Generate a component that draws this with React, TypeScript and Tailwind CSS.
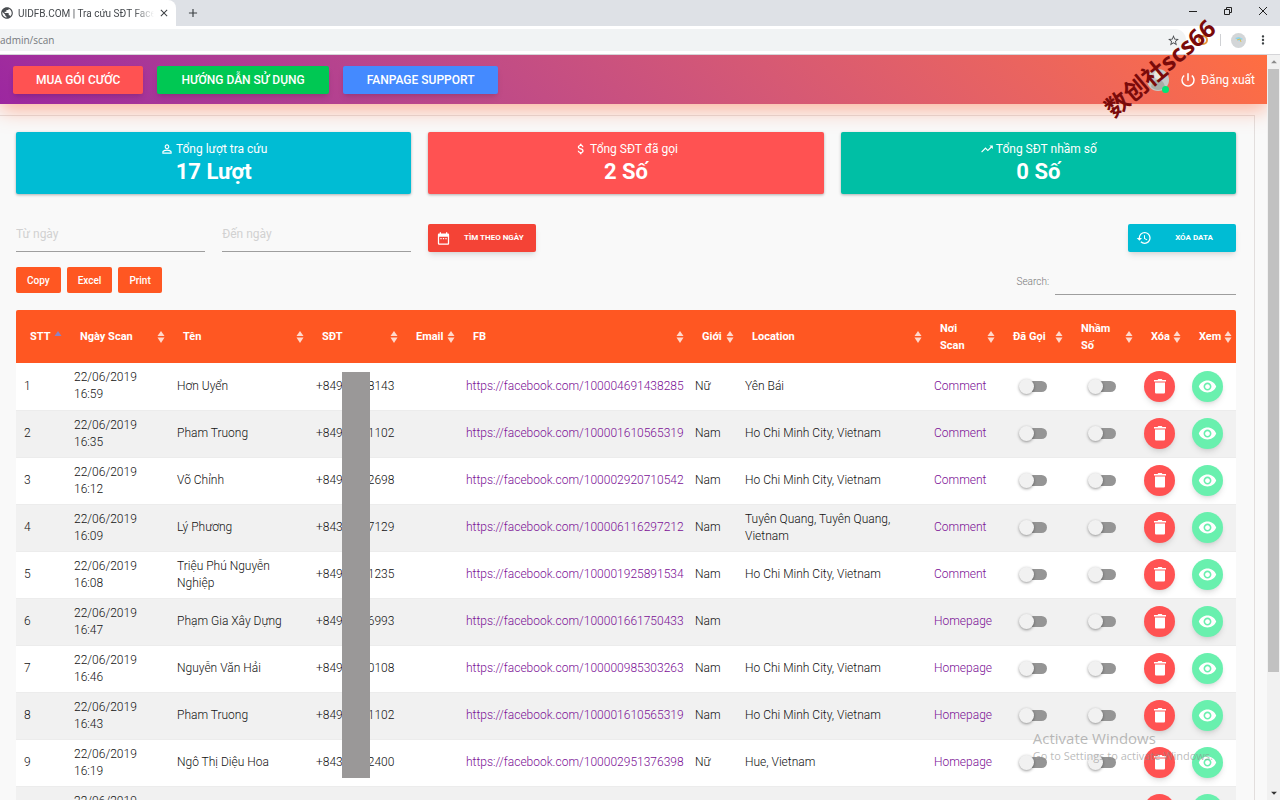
import { ReactNode, useState } from "react";
import {
  MdClose,
  MdAdd,
  MdPublic,
  MdStarBorder,
  MdMoreVert,
  MdPowerSettingsNew,
  MdPersonOutline,
  MdAttachMoney,
  MdTrendingUp,
  MdDateRange,
  MdHistory,
  MdRemoveRedEye,
  MdArrowDropUp,
  MdArrowDropDown,
} from "react-icons/md";

interface Scan {
  id: number;
  time: string;
  name: string;
  phone: [string, string];
  fb: string;
  gender: string;
  location: string;
  source: string;
}

const scans: Scan[] = [
  { id: 1, time: "16:59", name: "Hơn Uyển", phone: ["+849", "8143"], fb: "100004691438285", gender: "Nữ", location: "Yên Bái", source: "Comment" },
  { id: 2, time: "16:35", name: "Pham Truong", phone: ["+849", "1102"], fb: "100001610565319", gender: "Nam", location: "Ho Chi Minh City, Vietnam", source: "Comment" },
  { id: 3, time: "16:12", name: "Võ Chỉnh", phone: ["+849", "2698"], fb: "100002920710542", gender: "Nam", location: "Ho Chi Minh City, Vietnam", source: "Comment" },
  { id: 4, time: "16:09", name: "Lý Phương", phone: ["+843", "7129"], fb: "100006116297212", gender: "Nam", location: "Tuyên Quang, Tuyên Quang, Vietnam", source: "Comment" },
  { id: 5, time: "16:08", name: "Triệu Phú Nguyễn Nghiệp", phone: ["+849", "1235"], fb: "100001925891534", gender: "Nam", location: "Ho Chi Minh City, Vietnam", source: "Comment" },
  { id: 6, time: "16:47", name: "Phạm Gia Xây Dựng", phone: ["+849", "6993"], fb: "100001661750433", gender: "Nam", location: "", source: "Homepage" },
  { id: 7, time: "16:46", name: "Nguyễn Văn Hải", phone: ["+849", "0108"], fb: "100000985303263", gender: "Nam", location: "Ho Chi Minh City, Vietnam", source: "Homepage" },
  { id: 8, time: "16:43", name: "Pham Truong", phone: ["+849", "1102"], fb: "100001610565319", gender: "Nam", location: "Ho Chi Minh City, Vietnam", source: "Homepage" },
  { id: 9, time: "16:19", name: "Ngô Thị Diệu Hoa", phone: ["+843", "2400"], fb: "100002951376398", gender: "Nữ", location: "Hue, Vietnam", source: "Homepage" },
  { id: 10, time: "16:12", name: "", phone: ["", ""], fb: "", gender: "", location: "", source: "" },
];

const columns = [
  { title: "STT", width: "w-[50px]" },
  { title: "Ngày Scan", width: "w-[103px]" },
  { title: "Tên", width: "w-[139px]" },
  { title: "SĐT", width: "w-[94px]" },
  { title: "Email", width: "w-[57px]" },
  { title: "FB", width: "w-[229px]" },
  { title: "Giới", width: "w-[50px]" },
  { title: "Location", width: "" },
  { title: "Nơi Scan", width: "w-[73px]" },
  { title: "Đã Gọi", width: "w-[68px]" },
  { title: "Nhầm Số", width: "w-[70px]" },
  { title: "Xóa", width: "w-[48px]" },
  { title: "Xem", width: "w-[51px]" },
];

function BrowserBar() {
  return (
    <div className="shrink-0 bg-white">
      <div className="flex h-[26px] bg-[#dee1e6]">
        <div className="flex w-44 items-center rounded-tr-lg bg-white">
          <MdPublic className="size-3.5 shrink-0 text-[#4a4d51]" />
          <span className="ml-1 w-[136px] overflow-hidden whitespace-nowrap text-[10px] text-[#45494d] [mask-image:linear-gradient(to_right,black_85%,transparent)]">
            UIDFB.COM | Tra cứu SĐT Facebook
          </span>
          <button aria-label="Close tab" className="ml-1 text-[#3c4043]">
            <MdClose className="size-3" />
          </button>
        </div>
        <button aria-label="New tab" className="ml-2.5 text-[#3c4043]">
          <MdAdd className="size-3.5" />
        </button>
        <div className="ml-auto flex items-center gap-[25px] pr-3 pb-1 text-[#222]">
          <button aria-label="Minimize">
            <svg width="10" height="10" viewBox="0 0 10 10" stroke="currentColor">
              <path d="M1 5.5h8" />
            </svg>
          </button>
          <button aria-label="Restore">
            <svg width="10" height="10" viewBox="0 0 10 10" fill="none" stroke="currentColor">
              <path d="M1.5 3.5h5v5h-5zM3.5 3V1.5h5v5H7" />
            </svg>
          </button>
          <button aria-label="Close window">
            <svg width="10" height="10" viewBox="0 0 10 10" stroke="currentColor">
              <path d="M1 1l8 8M9 1l-8 8" />
            </svg>
          </button>
        </div>
      </div>
      <div className="flex h-[29px] items-center border-b border-[#d5d5d8]">
        <div className="flex h-[22px] flex-1 items-center justify-between rounded-r-full bg-[#f1f3f4] pr-1.5 text-[10px] text-[#76797d]">
          <span className="font-['Open_Sans',sans-serif]">admin/scan</span>
          <MdStarBorder className="size-[13px] text-[#4a4d51]" />
        </div>
        <div className="flex items-center pr-2.5">
          <span className="ml-3 size-2.5 rounded-full border-2 border-[#e8963c]" />
          <span className="ml-3 h-3 w-px bg-[#cfd1d4]" />
          <span className="ml-2.5 flex size-[15px] items-center justify-center rounded-full bg-[#d3d6d8]">
            <svg width="10" height="8" viewBox="0 0 10 8">
              <path d="M1 2l4-1 4 2-4 2z" fill="#8fd3ea" />
              <path d="M3 4l3-1 1 3" stroke="#d9c05a" fill="none" />
            </svg>
          </span>
          <button aria-label="Menu" className="ml-2.5 text-[#3c4043]">
            <MdMoreVert className="size-3.5" />
          </button>
        </div>
      </div>
    </div>
  );
}

function Navbar() {
  return (
    <header className="z-10 flex h-[49px] shrink-0 items-center bg-linear-45 from-[#9c27a0] to-[#ff6e40] pr-3 pl-[13px] shadow-[0_6px_20px_0_rgba(255,110,64,0.5)]">
      <nav className="flex gap-3.5 text-xs font-medium text-white">
        <a href="#pricing" className="flex h-7 items-center rounded-xs bg-[#ff5252] px-[23px] shadow-md">
          MUA GÓI CƯỚC
        </a>
        <a href="#guide" className="flex h-7 items-center rounded-xs bg-[#00c853] px-6 shadow-md">
          HƯỚNG DẪN SỬ DỤNG
        </a>
        <a href="#support" className="flex h-7 items-center rounded-xs bg-[#448aff] px-6 shadow-md">
          FANPAGE SUPPORT
        </a>
      </nav>
      <div className="ml-auto flex items-center text-white">
        <span className="relative mr-2.5 size-[22px] rounded-full bg-[#c3c9c6]">
          <svg width="22" height="22" viewBox="0 0 22 22">
            <circle cx="11" cy="6" r="4" fill="#e9e6df" />
            <path d="M4 18c1-6 4-7 7-7s6 1 7 7c-4 4-10 4-14 0z" fill="#a9aca6" />
          </svg>
          <span className="absolute right-0 -bottom-0.5 size-[7px] rounded-full bg-[#00e676]" />
        </span>
        <a href="#logout" className="flex items-center gap-1 text-xs">
          <MdPowerSettingsNew className="size-[18px]" />
          Đăng xuất
        </a>
      </div>
    </header>
  );
}

function StatCard({ icon, title, value, color }: { icon: ReactNode; title: string; value: string; color: string }) {
  return (
    <div className={`flex flex-col items-center rounded-xs py-2 text-white shadow-[0_1px_3px_rgba(0,0,0,0.3)] ${color}`}>
      <p className="flex items-center gap-0.5 text-xs leading-[18px]">
        {icon}
        {title}
      </p>
      <h4 className="text-[22px] leading-7 font-bold">{value}</h4>
    </div>
  );
}

function Toggle({ label }: { label: string }) {
  const [on, setOn] = useState<boolean>(false);

  return (
    <label className="relative mx-auto flex h-[15px] w-7 items-center">
      <input
        type="checkbox"
        aria-label={label}
        checked={on}
        onChange={(e) => setOn(e.target.checked)}
        className="peer absolute inset-0 opacity-0"
      />
      <span className="ml-0.5 h-[11px] w-full rounded-full bg-[#959595] peer-checked:bg-[#84c7c1]" />
      <span className="absolute top-0 left-0 size-[15px] rounded-full bg-[#f1f1f1] shadow-[0_1px_3px_rgba(0,0,0,0.4)] peer-checked:translate-x-3.5" />
    </label>
  );
}

function SortIcon({ active }: { active: boolean }) {
  return (
    <svg width="8" height="12" viewBox="0 0 8 12" className="absolute inset-y-0 right-1 my-auto">
      <path d="M4 0l3.5 5H.5z" fill={active ? "#8a83c4" : "#ffd9cd"} />
      {!active && <path d="M4 12l3.5-5.5H.5z" fill="#ffd9cd" />}
    </svg>
  );
}

function ScanTable() {
  return (
    <div className="relative mt-[15px]">
      <table className="w-full table-fixed border-collapse text-left text-xs leading-[17px] text-[#111]">
        <thead className="bg-[#ff5722] text-white">
          <tr className="h-[53px]">
            {columns.map((col, index) => (
              <th
                key={col.title}
                className={`relative pr-4 pl-3.5 text-[11px] font-bold first:rounded-tl-xs last:rounded-tr-xs ${col.width}`}
              >
                {col.title}
                <SortIcon active={index === 0} />
              </th>
            ))}
          </tr>
        </thead>
        <tbody className="font-light">
          {scans.map((scan) => (
            <tr key={scan.id} className="h-[47px] border-b border-[#ececec] odd:bg-white even:bg-[#f1f1f1]">
              <td className="px-2">{scan.id}</td>
              <td className="px-2">
                22/06/2019
                <br />
                {scan.time}
              </td>
              <td className="px-2">{scan.name}</td>
              <td className="px-2">
                <span className="flex gap-[25px]">
                  <span>{scan.phone[0]}</span>
                  <span>{scan.phone[1]}</span>
                </span>
              </td>
              <td />
              <td className="px-[7px]">
                {scan.fb && (
                  <a href={`https://facebook.com/${scan.fb}`} className="text-[#7b1095]">
                    https://facebook.com/{scan.fb}
                  </a>
                )}
              </td>
              <td className="px-[7px]">{scan.gender}</td>
              <td className="px-[7px]">{scan.location}</td>
              <td className="px-2">
                <a href="#source" className="text-[#7b1095]">
                  {scan.source}
                </a>
              </td>
              <td>
                <Toggle label="Đã Gọi" />
              </td>
              <td>
                <Toggle label="Nhầm Số" />
              </td>
              <td className="pl-[7px]">
                <button
                  aria-label="Xóa"
                  className="flex size-[31px] items-center justify-center rounded-full bg-[#ff5252] text-white shadow-md"
                >
                  <svg width="12" height="15" viewBox="0 0 12 15" fill="currentColor">
                    <path d="M0 1h3.5l.8-1h3.4l.8 1H12v1.500H0zM1 3.500h10v9.700c0 .8-.6 1.300-1.400 1.300H2.400C1.600 14.500 1 14 1 13.200z" />
                  </svg>
                </button>
              </td>
              <td className="pl-[7px]">
                <button
                  aria-label="Xem"
                  className="flex size-[31px] items-center justify-center rounded-full bg-[#69f0ae] text-white shadow-md"
                >
                  <MdRemoveRedEye className="size-[19px]" />
                </button>
              </td>
            </tr>
          ))}
        </tbody>
      </table>
      {/* covers the middle digits of the phone numbers */}
      <div className="absolute top-[62px] left-[326px] h-[406px] w-7 bg-[#9a9898]" />
    </div>
  );
}

function ScanPage() {
  const [search, setSearch] = useState<string>("");

  return (
    <main className="mt-[11px] mr-3 border-t border-r border-[#e2dedd] pt-4 pr-[18px] pl-4">
      {/* Stats */}
      <div className="grid grid-cols-3 gap-[17px]">
        <StatCard icon={<MdPersonOutline className="size-3.5" />} title="Tổng lượt tra cứu" value="17 Lượt" color="bg-[#00bcd4]" />
        <StatCard icon={<MdAttachMoney className="size-3.5" />} title="Tổng SĐT đã gọi" value="2 Số" color="bg-[#ff5252]" />
        <StatCard icon={<MdTrendingUp className="size-3.5" />} title="Tổng SĐT nhầm số" value="0 Số" color="bg-[#00bfa5]" />
      </div>

      {/* Date filter */}
      <div className="mt-[30px] grid grid-cols-3 gap-[17px]">
        <div className="flex gap-[17px] text-xs">
          <input
            aria-label="Từ ngày"
            placeholder="Từ ngày"
            className="h-7 w-full min-w-0 border-b border-[#9e9e9e] pb-2 outline-none placeholder:text-[#d1d1d1]"
          />
          <input
            aria-label="Đến ngày"
            placeholder="Đến ngày"
            className="h-7 w-full min-w-0 border-b border-[#9e9e9e] pb-2 outline-none placeholder:text-[#d1d1d1]"
          />
        </div>
        <div className="flex">
          <button className="flex h-7 w-[108px] items-center rounded-xs bg-[#f44336] pl-2 text-[8px] font-bold text-white shadow-md">
            <MdDateRange className="size-[15px]" />
            <span className="flex-1 text-center">TÌM THEO NGÀY</span>
          </button>
        </div>
        <div className="flex justify-end">
          <button className="flex h-7 w-[108px] items-center rounded-xs bg-[#00bcd4] pl-2 text-[8px] font-bold text-white shadow-md">
            <MdHistory className="size-4" />
            <span className="flex-1 text-center">XÓA DATA</span>
          </button>
        </div>
      </div>

      {/* Export, search */}
      <div className="mt-[15px] flex justify-between">
        <div className="flex h-[26px] gap-1.5 text-[10px] font-medium text-white">
          <button className="rounded-xs bg-[#ff5722] px-[11px]">Copy</button>
          <button className="rounded-xs bg-[#ff5722] px-[11px]">Excel</button>
          <button className="rounded-xs bg-[#ff5722] px-[11px]">Print</button>
        </div>
        <label className="flex h-7 items-center gap-1.5 text-[10px] font-light text-[#777]">
          Search:
          <input
            value={search}
            onChange={(e) => setSearch(e.target.value)}
            className="h-full w-[181px] border-b border-[#9e9e9e] outline-none"
          />
        </label>
      </div>

      <ScanTable />
    </main>
  );
}

export default function App() {
  return (
    <div className="relative flex h-screen flex-col overflow-hidden bg-[#f9f9f9] font-['Roboto',sans-serif]">
      <BrowserBar />
      <div className="flex min-h-0 flex-1">
        <div className="flex min-w-0 flex-1 flex-col overflow-hidden">
          <Navbar />
          <ScanPage />
        </div>
        <div className="z-20 flex w-[13px] shrink-0 flex-col items-center justify-between bg-[#f1f1f1]">
          <MdArrowDropUp className="size-3.5 text-[#8b8b8b]" />
          <div className="mb-auto h-[81%] w-[11px] bg-[#c1c1c1]" />
          <MdArrowDropDown className="size-3.5 text-[#333]" />
        </div>
      </div>

      {/* Watermarks */}
      <div className="pointer-events-none absolute right-[67px] bottom-9 z-30 font-['Open_Sans',sans-serif] whitespace-nowrap text-[#8c8c8c]/60">
        <p className="text-[15px] leading-[17px]">Activate Windows</p>
        <p className="text-[11px] leading-[17px]">Go to Settings to activate Windows.</p>
      </div>
      <div className="pointer-events-none absolute top-[52px] right-[52px] z-30 -rotate-40 font-['Open_Sans','Noto_Sans_CJK_SC',sans-serif] text-2xl font-bold whitespace-nowrap text-[#7a0a0a]">
        数创社scs66
      </div>
    </div>
  );
}
